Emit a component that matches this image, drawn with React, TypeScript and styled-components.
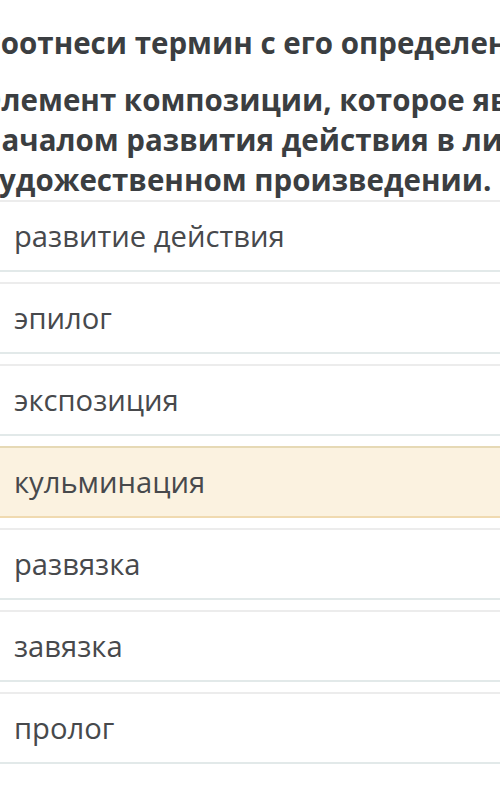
import React from "react";
import styled, { createGlobalStyle } from "styled-components";

const Global = createGlobalStyle`
  html, body {
    margin: 0;
    padding: 0;
    background: #ffffff;
    overflow: hidden;
  }
  body {
    font-family: "Open Sans", "Noto Sans", sans-serif;
  }
`;

const Page = styled.div`
  width: 500px;
  height: 792px;
  overflow: hidden;
  background: #ffffff;
`;

const Sheet = styled.div`
  margin-left: -18px;
  width: 760px;
  padding-top: 23px;
  display: flex;
  flex-direction: column;
`;

const Title = styled.div`
  font-size: 29.5px;
  font-weight: 700;
  line-height: 40px;
  color: #3b3e41;
  white-space: nowrap;
`;

const Question = styled.div`
  margin-top: 17px;
  font-size: 29.5px;
  font-weight: 700;
  line-height: 40px;
  color: #3b3e41;
  white-space: nowrap;
`;

const Options = styled.div`
  display: flex;
  flex-direction: column;
  gap: 10px;
`;

const Option = styled.div<{ $selected?: boolean }>`
  height: 72px;
  box-sizing: border-box;
  display: flex;
  align-items: center;
  padding-left: 32px;
  font-size: 29.2px;
  color: #47494c;
  background: ${(p) => (p.$selected ? "#fbf2e0" : "#ffffff")};
  border-top: 2px solid ${(p) => (p.$selected ? "#e6d9b5" : "#ececec")};
  border-bottom: 2px solid ${(p) => (p.$selected ? "#f0dab0" : "#e2e9e9")};
`;

const options = [
  "развитие действия",
  "эпилог",
  "экспозиция",
  "кульминация",
  "развязка",
  "завязка",
  "пролог",
];

export default function App() {
  return (
    <Page>
      <Global />
      <Sheet>
        <Title>Соотнеси термин с его определением.</Title>
        <Question>
          Элемент композиции, которое является
          <br />
          началом развития действия в литературном
          <br />
          художественном произведении.
        </Question>
        <Options>
          {options.map((o) => (
            <Option key={o} $selected={o === "кульминация"}>
              {o}
            </Option>
          ))}
        </Options>
      </Sheet>
    </Page>
  );
}
